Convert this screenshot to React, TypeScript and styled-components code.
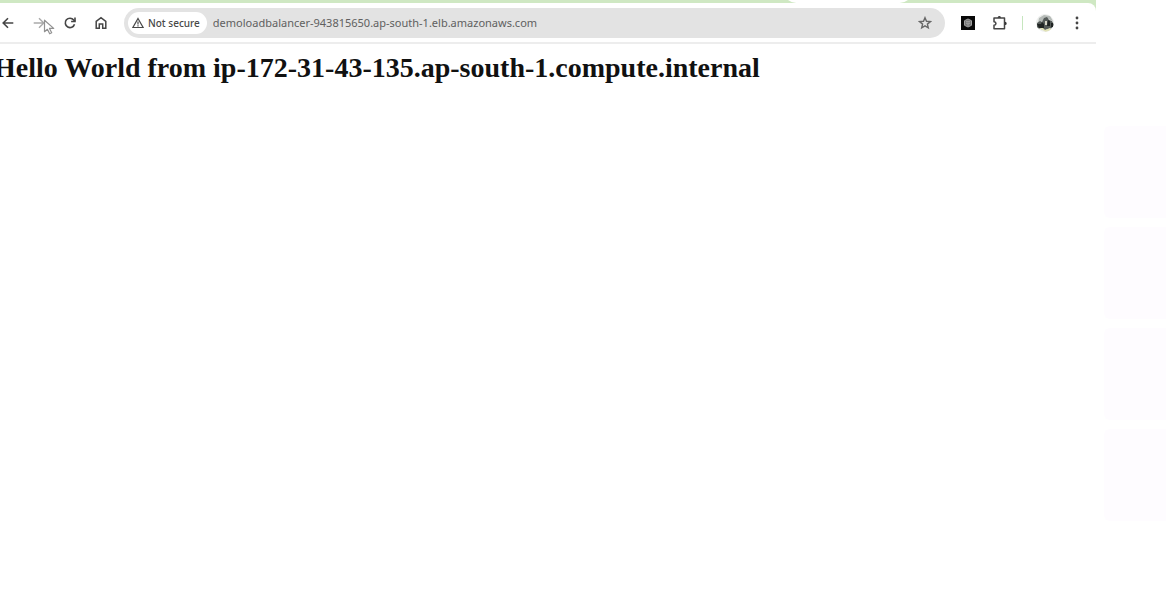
import React from "react";
import styled, { createGlobalStyle } from "styled-components";

const GlobalStyle = createGlobalStyle`
  * { box-sizing: border-box; }
  body { margin: 0; background: #fff; overflow-x: hidden; }
`;

const Screen = styled.div`
  display: flex;
  min-height: 100vh;
  overflow: hidden;
  background: #fff;
`;

const BrowserWindow = styled.div`
  flex: 1;
  min-width: 0;
`;

const TabStrip = styled.div`
  display: flex;
  justify-content: flex-end;
  height: 12px;
  padding-right: 188px;
  background: #cfe8c3;
`;

const ActiveTab = styled.div`
  width: 120px;
  height: 3px;
  background: #fff;
  clip-path: polygon(0 0, 100% 0, 97% 66%, 93% 100%, 7% 100%, 3% 66%);
`;

const Toolbar = styled.header`
  display: flex;
  align-items: center;
  height: 41px;
  margin-top: -9px;
  padding-top: 1px;
  border-bottom: 2px solid #ededed;
  border-radius: 0 8px 0 0;
  background: #fff;
`;

const Navigation = styled.nav`
  display: flex;
  gap: 1px;
  margin-left: -7px;
`;

const IconButton = styled.button<{ $color?: string }>`
  display: grid;
  place-items: center;
  width: 30px;
  height: 30px;
  padding: 0;
  border: 0;
  background: transparent;
  color: ${(p) => p.$color ?? "#454545"};

  svg { display: block; }
`;

const AddressBar = styled.div`
  display: flex;
  flex: 1;
  align-items: center;
  min-width: 0;
  height: 30px;
  margin-left: 8px;
  padding: 0 5px 0 4px;
  border-radius: 15px;
  background: #e3e3e3;
`;

const SecurityChip = styled.button`
  display: flex;
  align-items: center;
  gap: 4px;
  height: 22px;
  padding: 0 7px 0 4px;
  border: 0;
  border-radius: 11px;
  background: #fff;
  color: #484848;
  font: 500 10px/16px "Noto Sans", sans-serif;
  white-space: nowrap;
`;

const AddressInput = styled.input`
  flex: 1;
  min-width: 0;
  padding: 0 0 0 6px;
  border: 0;
  outline: 0;
  background: transparent;
  color: #606060;
  font: 11px/20px "Noto Sans", sans-serif;
`;

const Actions = styled.div`
  display: flex;
  align-items: center;
  gap: 2px;
  padding: 0 4px 0 8px;
`;

const Divider = styled.span`
  width: 1px;
  height: 14px;
  margin: 0 5px;
  background: #c6e6be;
`;

const Page = styled.main`
  padding: 8px 8px 0 0;
`;

const Heading = styled.h1`
  margin: 0 0 0 -6px;
  color: #111;
  font: bold 28px/32px "Liberation Serif", serif;
  white-space: nowrap;
`;

const SidePanel = styled.aside`
  display: flex;
  flex-direction: column;
  gap: 9px;
  width: 70px;
  padding: 126px 0 0 8px;
`;

const SideTile = styled.div`
  height: 92px;
  border-radius: 6px 0 0 6px;
  background: #fefcff;
`;

const Pointer = styled.svg`
  position: absolute;
  top: 19px;
  left: 43px;
  pointer-events: none;
`;

const stroke = {
  fill: "none",
  stroke: "currentColor",
  strokeWidth: 1.6,
} as const;

const BackIcon = () => (
  <svg width="12" height="12" viewBox="0 0 12 12" {...stroke}>
    <path d="M11.3 6H1.5M6 1.2 1.2 6 6 10.8" />
  </svg>
);

const ForwardIcon = () => (
  <svg width="12" height="12" viewBox="0 0 12 12" {...stroke} strokeWidth={1.4}>
    <path d="M.7 6h9.8M6 1.2 10.8 6 6 10.8" />
  </svg>
);

const ReloadIcon = () => (
  <svg width="12" height="12" viewBox="0 0 12 12" {...stroke}>
    <path d="M10.5 7.2A4.7 4.7 0 1 1 9.7 3L11 4.4" />
    <path d="M11 .6v3.9H7.1" />
  </svg>
);

const HomeIcon = () => (
  <svg width="12" height="14" viewBox="0 0 12 14" {...stroke} strokeWidth={1.5}>
    <path d="M1.2 5.3 6 1.6l4.8 3.7v7H7.7V8H4.3v4.3H1.2z" />
  </svg>
);

const WarningIcon = () => (
  <svg width="12" height="12" viewBox="0 0 12 12" {...stroke} strokeWidth={1.2}>
    <path d="M6 1.5 11.1 10.5H.9zM6 4.5v3M6 8.3v1.2" />
  </svg>
);

const StarIcon = () => (
  <svg width="14" height="14" viewBox="0 0 14 14" {...stroke} strokeWidth={1.4}>
    <path d="m7 1.7 1.5 3.6 3.9.3-3 2.5.9 3.8L7 9.9l-3.3 2 .9-3.8-3-2.5 3.9-.3z" />
  </svg>
);

const ExtensionIcon = () => (
  <svg width="14" height="14" viewBox="0 0 14 14">
    <rect width="14" height="14" fill="#080808" />
    <path d="M7 3 10.5 4.7v4.6L7 11 3.5 9.3V4.7z" fill="#777" stroke="#a0a0a0" />
    <path d="M5 5.7h4M5 7.3h4M6 8.9h2" stroke="#b5b5b5" strokeWidth=".7" />
  </svg>
);

const PuzzleIcon = () => (
  <svg width="16" height="16" viewBox="0 0 16 16">
    <path
      d="M2 3.1h10.5v10.7H2v-3.5c2.6-.4 2.6-3.2 0-3.6z"
      fill="none"
      stroke="#454545"
      strokeWidth="1.5"
      strokeLinejoin="round"
    />
    <path d="M5.6 2.8a1.7 1.7 0 0 1 3.4 0zM13 6.7a1.7 1.7 0 0 1 0 3.4z" fill="#333" />
  </svg>
);

const ProfilePicture = () => (
  <svg width="18" height="18" viewBox="0 0 18 18">
    <defs>
      <clipPath id="profile-circle"><circle cx="9" cy="9" r="9" /></clipPath>
    </defs>
    <g clipPath="url(#profile-circle)">
      <path d="M0 0h18v18H0z" fill="#eceeec" />
      <path d="M3 4 8 1l6 1 3 5-5-2-5 2-5 2z" fill="#b5bab7" />
      <path d="m1 9 3-2 2 1 2-4 3-1 2 3 3 1 2 4-2 3-7 2-8-2z" fill="#555b59" />
      <path d="M1 10h4l1-2 2 2v4H3zM12 6l2 1v5h-3zM15 9h2v4h-2z" fill="#202423" />
      <path d="M9 7h2v4H9z" fill="#d4d3c5" />
      <path d="M3 14h4l2 2 5-2 1 2-5 2z" fill="#e2e3b8" />
    </g>
  </svg>
);

const MenuIcon = () => (
  <svg width="4" height="14" viewBox="0 0 4 14" fill="currentColor">
    <circle cx="2" cy="2" r="1.4" />
    <circle cx="2" cy="7" r="1.4" />
    <circle cx="2" cy="12" r="1.4" />
  </svg>
);

export default function App() {
  return (
    <Screen>
      <GlobalStyle />
      <BrowserWindow>
        <TabStrip><ActiveTab /></TabStrip>
        <Toolbar>
          <Navigation aria-label="Browser navigation">
            <IconButton aria-label="Back"><BackIcon /></IconButton>
            <IconButton aria-label="Forward" $color="#aaa"><ForwardIcon /></IconButton>
            <IconButton aria-label="Reload"><ReloadIcon /></IconButton>
            <IconButton aria-label="Home"><HomeIcon /></IconButton>
          </Navigation>
          <AddressBar>
            <SecurityChip><WarningIcon />Not secure</SecurityChip>
            <AddressInput
              aria-label="Address"
              spellCheck={false}
              defaultValue="demoloadbalancer-943815650.ap-south-1.elb.amazonaws.com"
            />
            <IconButton aria-label="Bookmark this page" $color="#686868"><StarIcon /></IconButton>
          </AddressBar>
          <Actions>
            <IconButton aria-label="Extension"><ExtensionIcon /></IconButton>
            <IconButton aria-label="Extensions"><PuzzleIcon /></IconButton>
            <Divider />
            <IconButton aria-label="Profile"><ProfilePicture /></IconButton>
            <IconButton aria-label="Menu"><MenuIcon /></IconButton>
          </Actions>
        </Toolbar>
        <Page>
          <Heading>Hello World from ip-172-31-43-135.ap-south-1.compute.internal</Heading>
        </Page>
      </BrowserWindow>
      <SidePanel>
        <SideTile />
        <SideTile />
        <SideTile />
        <SideTile />
      </SidePanel>
      <Pointer width="13" height="17" viewBox="0 0 13 17" aria-hidden="true">
        <path
          d="M1.5 1.2v11.5l2.9-2.4 2.3 4.5 2-1-2.2-4.4h4.2z"
          fill="#fff"
          stroke="#929292"
          strokeWidth="1.2"
          strokeLinejoin="round"
        />
      </Pointer>
    </Screen>
  );
}
